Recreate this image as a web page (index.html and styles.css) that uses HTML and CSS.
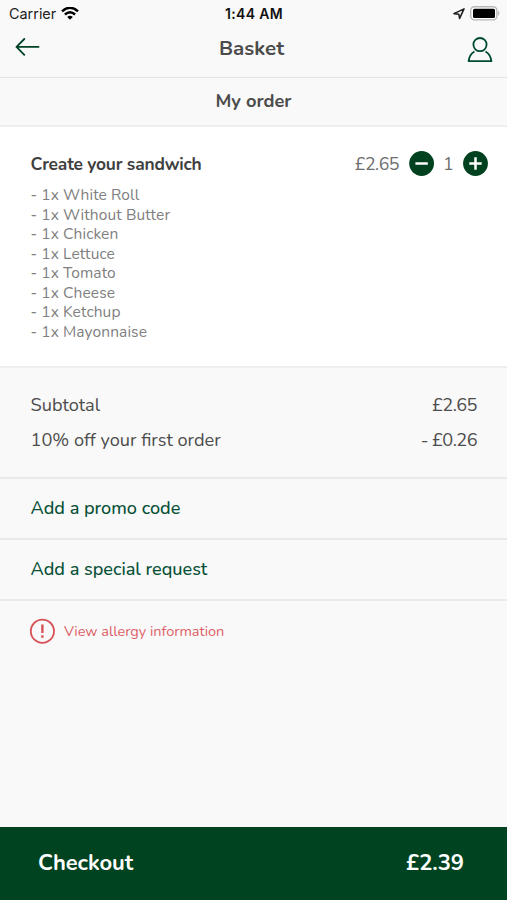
FILE: index.html
```html
<!DOCTYPE html>
<html lang="en">
<head>
<meta charset="utf-8">
<title>Basket</title>
<link rel="stylesheet" href="styles.css">
</head>
<body>
<div class="app">
  <div class="status">
    <div class="carrier"><span>Carrier</span>
      <svg width="18" height="14" viewBox="0 0 18 14" fill="none" stroke="#000" stroke-width="2.5"><path d="M1 4.4Q9-2.8 17 4.4M3.9 7.5Q9 3 14.1 7.5"/><path d="M6.2 9.9Q9 7.4 11.8 9.9L9 12.7Z" fill="#000" stroke="none"/></svg>
    </div>
    <span class="time">1:44 AM</span>
    <div class="power">
      <svg width="12" height="12" viewBox="0 0 12 12" fill="none" stroke="#222" stroke-width="1.6" stroke-linejoin="round"><path d="M1 5.6 11 .9 6.6 10.4 5.8 6.2Z"/></svg>
      <svg width="31" height="15" viewBox="0 0 31 15"><rect x=".7" y=".7" width="26.2" height="13.2" rx="3.8" fill="#fff" stroke="#b8b8b8" stroke-width="1.4"/><rect x="3" y="2.7" width="22" height="9.2" rx="1.5"/><path d="M28 4.8Q31 7.3 28 9.8Z" fill="#b8b8b8"/></svg>
    </div>
  </div>
  <header class="nav">
    <svg width="26" height="20" viewBox="0 0 26 20" fill="none" stroke="#004225" stroke-width="1.8" stroke-linecap="round" stroke-linejoin="round"><path d="M23.5 8.9H1.5M9.3 1 1.5 8.9 9.3 16.8"/></svg>
    <h1>Basket</h1>
    <svg width="26" height="26" viewBox="0 0 26 26" fill="none" stroke="#004b30" stroke-width="1.8" stroke-linejoin="round"><circle cx="13" cy="7.6" r="6.6"/><path d="M7.5 14.5Q2.5 17.3 1.6 24.2H24.4Q23.5 17.3 18.5 14.5"/></svg>
  </header>
  <h2 class="heading">My order</h2>
  <section class="item">
    <div class="item-head">
      <h3>Create your sandwich</h3>
      <span class="price">£2.65</span>
      <svg class="minus" width="26" height="26" viewBox="0 0 26 26"><circle cx="12.6" cy="12.5" r="12.4" fill="#00421f"/><path d="M6.4 12.5H18.8" stroke="#fff" stroke-width="2.5"/></svg>
      <span class="qty">1</span>
      <svg width="26" height="26" viewBox="0 0 26 26"><circle cx="12.5" cy="12.5" r="12.4" fill="#00421f"/><path d="M6.3 12.5H18.7M12.5 6.3V18.7" stroke="#fff" stroke-width="2.5"/></svg>
    </div>
    <ul>
      <li>- 1x White Roll</li>
      <li>- 1x Without Butter</li>
      <li>- 1x Chicken</li>
      <li>- 1x Lettuce</li>
      <li>- 1x Tomato</li>
      <li>- 1x Cheese</li>
      <li>- 1x Ketchup</li>
      <li>- 1x Mayonnaise</li>
    </ul>
  </section>
  <section class="totals">
    <div class="row"><span>Subtotal</span><span class="amount">£2.65</span></div>
    <div class="row"><span>10% off your first order</span><span class="amount">- £0.26</span></div>
  </section>
  <div class="action">Add a promo code</div>
  <div class="action">Add a special request</div>
  <div class="allergy">
    <svg width="26" height="26" viewBox="0 0 26 26" fill="none" stroke="#d65257"><circle cx="13.4" cy="13.2" r="11.6" stroke-width="1.8"/><path d="M13.4 6.5V14.9M13.4 17.2V19.7" stroke-width="2.4"/></svg>
    <span>View allergy information</span>
  </div>
  <footer class="checkout"><span>Checkout</span><span>£2.39</span></footer>
</div>
</body>
</html>
```
FILE: styles.css
```css
* { box-sizing: border-box; }
body { margin: 0; font-family: Nunito, Lato, sans-serif; color: #4c4c4c; }
h1, h2, h3, ul { margin: 0; padding: 0; }
svg { display: block; flex: none; }
.app { height: 900px; display: flex; flex-direction: column; background: #f9f9f9; }
.status { height: 27px; display: grid; grid-template-columns: 1fr auto 1fr; align-items: center; padding: 0 7px 0 9px; font: 14.4px Inter, sans-serif; color: #222; }
.carrier, .power { display: flex; align-items: center; gap: 5px; }
.power { justify-content: flex-end; }
.power svg:last-child { margin-right: -1px; }
.time { font-weight: 600; font-size: 14px; color: #111; letter-spacing: .35px; margin-right: 1px; }
.nav { height: 51px; display: flex; align-items: center; justify-content: space-between; padding: 0 14px 9px 15px; border-bottom: 1px solid #e3e3e3; }
.nav h1 { font-size: 20.5px; line-height: 26px; margin-right: 5px; }
.nav svg:last-child { margin-top: 4px; }
.heading { height: 49px; font-size: 18.3px; line-height: 47px; text-align: center; border-bottom: 2px solid #eee; }
.item { height: 241px; padding: 24px 18px 0 30.5px; background: #fff; border-bottom: 2px solid #eee; }
.item-head { display: flex; align-items: center; height: 26px; margin-bottom: 8px; }
.item h3 { font-size: 17.4px; letter-spacing: -.2px; color: #3f3f3f; flex: 1; }
.price, .qty { font-size: 17.8px; letter-spacing: -.5px; color: #6d6d6d; }
.minus { margin: 0 8px 0 10px; }
.qty { width: 10px; margin-right: 10px; }
ul { list-style: none; font-size: 15.5px; line-height: 19.55px; color: #808080; letter-spacing: .1px; }
.totals { height: 111px; padding: 19.5px 30px 0 30.5px; border-bottom: 2px solid #eaeaea; font-size: 18.2px; }
.row { display: flex; justify-content: space-between; line-height: 35px; }
.amount { letter-spacing: -.55px; }
.action { height: 61px; padding-left: 30.5px; line-height: 59px; font-size: 18.1px; font-weight: 500; color: #075036; border-bottom: 2px solid #eaeaea; }
.allergy { display: flex; align-items: center; gap: 9px; padding: 17px 29px; font-size: 14.5px; color: #dc6065; }
.checkout { margin-top: auto; height: 73px; padding: 0 43px 1px 38px; display: flex; align-items: center; justify-content: space-between; background: #004320; color: #fff; font-size: 22px; font-weight: 700; letter-spacing: -.05px; }
```
